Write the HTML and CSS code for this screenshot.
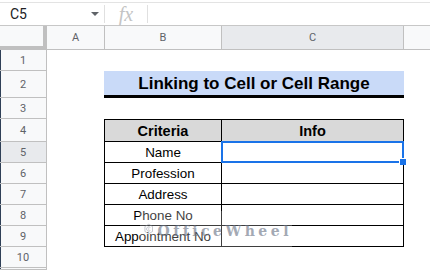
FILE: index.html
```html
<!DOCTYPE html>
<html lang="en">
<head>
    <meta charset="UTF-8">
    <title>Linking to Cell or Cell Range</title>
    <link rel="stylesheet" href="styles.css">
</head>
<body>
    <div class="toolbar">
        <div class="name-box">
            <span>C5</span>
            <span class="caret"></span>
        </div>
        <div class="fx">fx</div>
    </div>

    <div class="sheet">
        <!-- column headers -->
        <div class="corner"></div>
        <div class="col-head">A</div>
        <div class="col-head sep">B</div>
        <div class="col-head sep last active">C</div>
        <div class="col-head"></div>

        <!-- row 1 -->
        <div class="row-head">1</div>
        <div></div><div></div><div></div><div></div>

        <!-- row 2 -->
        <div class="row-head">2</div>
        <div></div>
        <div class="title">Linking to Cell or Cell Range</div>
        <div></div>

        <!-- row 3 -->
        <div class="row-head">3</div>
        <div></div><div></div><div></div><div></div>

        <!-- row 4 -->
        <div class="row-head">4</div>
        <div></div>
        <div class="th">Criteria</div>
        <div class="th right">Info</div>
        <div></div>

        <!-- row 5 -->
        <div class="row-head active">5</div>
        <div></div>
        <div class="td">Name</div>
        <div class="td right selected"></div>
        <div></div>

        <!-- row 6 -->
        <div class="row-head">6</div>
        <div></div>
        <div class="td">Profession</div>
        <div class="td right"></div>
        <div></div>

        <!-- row 7 -->
        <div class="row-head">7</div>
        <div></div>
        <div class="td">Address</div>
        <div class="td right"></div>
        <div></div>

        <!-- row 8 -->
        <div class="row-head">8</div>
        <div></div>
        <div class="td">Phone No</div>
        <div class="td right"></div>
        <div></div>

        <!-- row 9 -->
        <div class="row-head">9</div>
        <div></div>
        <div class="td">Appointment No</div>
        <div class="td right"></div>
        <div></div>

        <!-- row 10 -->
        <div class="row-head">10</div>
        <div></div><div></div><div></div><div></div>

        <!-- row 11 (cut off) -->
        <div class="row-head"></div>
        <div></div><div></div><div></div><div></div>
    </div>

    <div class="watermark">
        <svg width="30" height="34" viewBox="0 0 30 34">
            <path d="M15 2 L27 9 L27 25 L15 32 L3 25 L3 9 Z" fill="none" stroke="#9aa0aa" stroke-width="2.5" stroke-linejoin="round"/>
            <path d="M20 12 A7 7 0 1 0 20 22" fill="none" stroke="#9aa0aa" stroke-width="2.5"/>
            <path d="M15 12 L15 22" stroke="#9aa0aa" stroke-width="2"/>
        </svg>
        <span class="wm-text">OfficeWheel</span>
    </div>
</body>
</html>
```

FILE: styles.css
```css
* {
    margin: 0;
    padding: 0;
    box-sizing: border-box;
}

body {
    width: 430px;
    height: 270px;
    overflow: hidden;
    position: relative;
    background: #fff;
    font-family: "Liberation Sans", Arial, sans-serif;
    color: #000;
}

/* formula bar */
.toolbar {
    margin-top: 2px;
    height: 24px;
    border-top: 1px solid #e3e3e3;
    border-bottom: 1px solid #c7c7c7;
    display: flex;
    align-items: center;
}

.name-box {
    width: 105px;
    height: 18px;
    padding: 0 5px 0 10px;
    display: flex;
    align-items: center;
    justify-content: space-between;
    border-right: 1px solid #e0e0e0;
    font-family: Roboto, "Liberation Sans", sans-serif;
    font-size: 14px;
    color: #202124;
}

.caret {
    width: 0;
    height: 0;
    border-left: 4px solid transparent;
    border-right: 4px solid transparent;
    border-top: 4px solid #5f6368;
}

.fx {
    width: 43px;
    height: 18px;
    border-right: 1px solid #e0e0e0;
    text-align: center;
    font-family: "Liberation Serif", serif;
    font-style: italic;
    font-size: 20px;
    line-height: 18px;
    color: #c4c4c4;
}

/* grid */
.sheet {
    display: grid;
    grid-template-columns: 47px 57px 117px 183px 1fr;
    grid-template-rows: 24px 21px 27px 21px 23px 21px 21px 21px 21px 21px 21px 2px;
}

.corner {
    background: #f8f9fa;
    border-right: 4px solid #c0c0c0;
    border-bottom: 4px solid #c0c0c0;
}

.col-head {
    background: #f8f9fa;
    border-bottom: 1px solid #c0c0c0;
    display: flex;
    align-items: center;
    justify-content: center;
    font-family: Roboto, "Liberation Sans", sans-serif;
    font-size: 11px;
    color: #5f6368;
}

.col-head.sep {
    border-left: 1px solid #c0c0c0;
}

.col-head.last {
    border-right: 1px solid #c0c0c0;
}

.col-head.active,
.row-head.active {
    background: #e8eaed;
}

.row-head {
    background: #f8f9fa;
    border-right: 1px solid #c0c0c0;
    border-bottom: 1px solid #c0c0c0;
    box-shadow: inset 1px 0 0 #2f4057;
    display: flex;
    align-items: center;
    justify-content: center;
    font-family: Roboto, "Liberation Sans", sans-serif;
    font-size: 11px;
    color: #5f6368;
}

/* table */
.title {
    grid-column: span 2;
    background: #c9daf8;
    border-bottom: 3px solid #000;
    display: flex;
    align-items: center;
    justify-content: center;
    font-weight: bold;
    font-size: 17px;
    padding-top: 2px;
}

.th,
.td {
    border-left: 1px solid #000;
    border-bottom: 1px solid #000;
    display: flex;
    align-items: center;
    justify-content: center;
}

.th {
    border-top: 1px solid #000;
    background: #d9d9d9;
    font-weight: bold;
    font-size: 14.5px;
}

.td {
    font-size: 13.4px;
    padding-top: 1px;
}

.th.right,
.td.right {
    border-right: 1px solid #000;
}

.selected {
    position: relative;
}

.selected::after {
    content: "";
    position: absolute;
    left: -1px;
    top: -1px;
    right: -1px;
    bottom: -1px;
    border: 2px solid #1a73e8;
}

.selected::before {
    content: "";
    position: absolute;
    right: -3px;
    bottom: -3px;
    width: 6px;
    height: 6px;
    background: #1a73e8;
    border-left: 1px solid #fff;
    border-top: 1px solid #fff;
    z-index: 1;
}

/* watermark */
.watermark {
    position: absolute;
    left: 140px;
    top: 211px;
    width: 152px;
    height: 36px;
    display: flex;
    align-items: center;
    gap: 4px;
    padding-left: 4px;
    background: rgba(255, 255, 255, 0.35);
    opacity: 0.7;
}

.wm-text {
    font-family: "DejaVu Serif", serif;
    font-weight: bold;
    font-size: 14px;
    letter-spacing: 3.5px;
    color: #7d8595;
    padding-top: 4px;
}
```
